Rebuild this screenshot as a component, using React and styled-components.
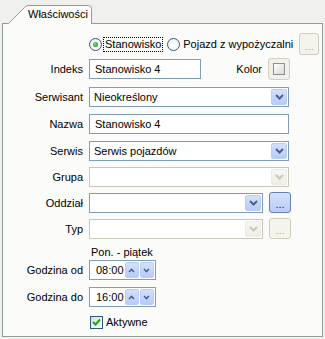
import React from 'react';
import styled, { createGlobalStyle, css } from 'styled-components';

const Global = createGlobalStyle`
  html, body { margin: 0; padding: 0; background: #f0f0ee; }
  body { font-family: "Liberation Sans", Arial, sans-serif; font-size: 11px; color: #000; }
`;

const Page = styled.div`
  width: 325px;
  height: 339px;
  box-sizing: border-box;
  padding: 5px 2px 2px 2px;
  display: flex;
  flex-direction: column;
`;

const TabStrip = styled.div`
  display: flex;
  height: 18px;
  padding-left: 6px;
  position: relative;
  z-index: 1;
`;

const Tab = styled.div`
  position: relative;
  width: 84px;
  height: 19px;
  box-sizing: border-box;
  padding-left: 20px;
`;

const TabShape = styled.svg`
  position: absolute;
  left: 0;
  top: 0;
`;

const TabText = styled.span`
  position: relative;
  line-height: 19px;
  white-space: nowrap;
`;

const Panel = styled.div`
  flex: 1;
  box-sizing: border-box;
  border: 1px solid #919b9c;
  background: #fbfbfa;
  padding-top: 9px;
  display: flex;
  flex-direction: column;
`;

const RadioRow = styled.div`
  display: flex;
  align-items: center;
  height: 22px;
  padding-left: 86px;
  padding-right: 3px;
`;

const RadioOption = styled.div`
  display: flex;
  align-items: center;
  margin-right: 4px;
`;

const RadioCircle = styled.span`
  width: 13px;
  height: 13px;
  box-sizing: border-box;
  border-radius: 50%;
  border: 1px solid #2f5a86;
  background: radial-gradient(circle at 60% 60%, #ffffff 30%, #e3e2dc 100%);
  display: flex;
  align-items: center;
  justify-content: center;
  &::after {
    content: '';
    display: ${(p) => (p.$checked ? 'block' : 'none')};
    width: 5px;
    height: 5px;
    border-radius: 50%;
    background: radial-gradient(circle at 40% 40%, #7ee27e 0%, #21a121 70%);
  }
`;

const RadioLabel = styled.span`
  margin-left: 1px;
  padding: 0 1px;
  line-height: 13px;
  border: 1px dotted ${(p) => (p.$focused ? '#000' : 'transparent')};
  white-space: nowrap;
`;

const Form = styled.div`
  display: flex;
  flex-direction: column;
`;

const Row = styled.div`
  display: grid;
  grid-template-columns: 80px auto;
  column-gap: 6px;
  align-items: center;
  min-height: ${(p) => p.$h || 20}px;
  margin-top: ${(p) => p.$mt}px;
`;

const Label = styled.span`
  text-align: right;
  white-space: nowrap;
`;

const Controls = styled.div`
  display: flex;
  align-items: center;
  width: ${(p) => p.$w || 200}px;
`;

const fieldBox = css`
  height: 20px;
  box-sizing: border-box;
  border: 1px solid ${(p) => (p.$disabled ? '#c9c7ba' : '#7f9db9')};
  background: #fff;
`;

const TextInput = styled.div`
  ${fieldBox};
  width: ${(p) => p.$w}px;
  padding: 0 5px;
  line-height: 18px;
  white-space: nowrap;
`;

const Combo = styled.div`
  ${fieldBox};
  width: ${(p) => p.$w}px;
  display: flex;
  align-items: stretch;
  padding: 1px;
`;

const ComboText = styled.span`
  flex: 1;
  padding-left: 3px;
  line-height: 16px;
  white-space: nowrap;
`;

const ArrowBtn = styled.span`
  width: 16px;
  box-sizing: border-box;
  border-radius: 2px;
  border: 1px solid ${(p) => (p.$disabled ? '#ecebe5' : '#bccdf4')};
  background: ${(p) =>
    p.$disabled
      ? 'linear-gradient(#f7f6f1, #eeede7)'
      : 'linear-gradient(#d4e0fd, #b7cbf7)'};
  display: flex;
  align-items: center;
  justify-content: center;
`;

const DotsButton = styled.div`
  width: 22px;
  height: ${(p) => p.$h || 21}px;
  box-sizing: border-box;
  border-radius: 3px;
  border: 1px solid ${(p) => (p.$disabled ? '#cfccbd' : '#6680b0')};
  background: ${(p) =>
    p.$disabled
      ? '#f5f4ec'
      : 'linear-gradient(#d5e1fc, #b9ccf6)'};
  color: ${(p) => (p.$disabled ? '#b5b2a4' : '#1b2d4f')};
  display: flex;
  align-items: flex-end;
  justify-content: center;
  padding-bottom: 4px;
  line-height: 8px;
  font-size: 11px;
  margin-left: ${(p) => (p.$auto ? 'auto' : `${p.$ml || 0}px`)};
`;

const KolorLabel = styled.span`
  margin-left: auto;
  margin-right: 6px;
`;

const KolorButton = styled.div`
  width: 22px;
  height: 22px;
  box-sizing: border-box;
  border-radius: 3px;
  border: 1px solid #d3d0c2;
  background: #f1f0ea;
  display: flex;
  align-items: center;
  justify-content: center;
`;

const Swatch = styled.span`
  width: 12px;
  height: 12px;
  box-sizing: border-box;
  border: 1px solid #8f8f8f;
  background: linear-gradient(135deg, #ffffff, #d9d9d6);
`;

const PlainText = styled.span`
  padding-left: 2px;
  line-height: 14px;
  white-space: nowrap;
`;

const Spin = styled.div`
  ${fieldBox};
  width: 67px;
  display: flex;
  align-items: stretch;
  padding: 1px;
`;

const SpinText = styled.span`
  flex: 1;
  padding-left: 5px;
  line-height: 16px;
  font-size: 11px;
`;

const SpinBtn = styled.span`
  width: 15px;
  box-sizing: border-box;
  margin-left: 1px;
  border-radius: 2px;
  border: 1px solid #bccdf4;
  background: linear-gradient(#d4e0fd, #b7cbf7);
  display: flex;
  align-items: center;
  justify-content: center;
`;

const CheckRow = styled.div`
  display: flex;
  align-items: center;
  padding-left: 1px;
`;

const CheckBox = styled.span`
  width: 13px;
  height: 13px;
  box-sizing: border-box;
  border: 1px solid #2b5a87;
  background: linear-gradient(135deg, #dcdcd6, #ffffff);
  display: flex;
  align-items: center;
  justify-content: center;
`;

const CheckLabel = styled.span`
  margin-left: 3px;
  line-height: 14px;
`;

const Chevron = ({ disabled }) => (
  <svg width="9" height="6" viewBox="0 0 9 6">
    <path
      d="M1 1 L4.5 4.5 L8 1"
      fill="none"
      stroke={disabled ? '#c8c6b8' : '#4d6185'}
      strokeWidth="2"
    />
  </svg>
);

const SpinArrow = ({ up }) => (
  <svg width="7" height="5" viewBox="0 0 7 5">
    <path
      d={up ? 'M1 4 L3.5 1.5 L6 4' : 'M1 1 L3.5 3.5 L6 1'}
      fill="none"
      stroke="#4d6185"
      strokeWidth="1.6"
    />
  </svg>
);

const ComboField = ({ w, text, disabled }) => (
  <Combo $w={w} $disabled={disabled}>
    <ComboText>{text}</ComboText>
    <ArrowBtn $disabled={disabled}>
      <Chevron disabled={disabled} />
    </ArrowBtn>
  </Combo>
);

const SpinField = ({ value }) => (
  <Spin>
    <SpinText>{value}</SpinText>
    <SpinBtn>
      <SpinArrow up />
    </SpinBtn>
    <SpinBtn>
      <SpinArrow />
    </SpinBtn>
  </Spin>
);

export default function App() {
  return (
    <>
      <Global />
      <Page>
        <TabStrip>
          <Tab>
            <TabShape width="84" height="19" viewBox="0 0 84 19">
              <path
                d="M0.5 19 L0.5 18.5 L16.5 2.5 Q18 0.5 20 0.5 L80.5 0.5 Q83.5 0.5 83.5 3.5 L83.5 19"
                fill="#fbfbfa"
                stroke="#919b9c"
                strokeWidth="1"
              />
            </TabShape>
            <TabText>Właściwości</TabText>
          </Tab>
        </TabStrip>
        <Panel>
          <RadioRow>
            <RadioOption>
              <RadioCircle $checked />
              <RadioLabel $focused>Stanowisko</RadioLabel>
            </RadioOption>
            <RadioOption>
              <RadioCircle />
              <RadioLabel>Pojazd z wypożyczalni</RadioLabel>
            </RadioOption>
            <DotsButton $disabled $auto $h={22}>...</DotsButton>
          </RadioRow>
          <Form>
            <Row $mt={3} $h={22}>
              <Label>Indeks</Label>
              <Controls $w={201}>
                <TextInput $w={112}>Stanowisko 4</TextInput>
                <KolorLabel>Kolor</KolorLabel>
                <KolorButton>
                  <Swatch />
                </KolorButton>
              </Controls>
            </Row>
            <Row $mt={7}>
              <Label>Serwisant</Label>
              <Controls>
                <ComboField w={200} text="Nieokreślony" />
              </Controls>
            </Row>
            <Row $mt={7}>
              <Label>Nazwa</Label>
              <Controls>
                <TextInput $w={200}>Stanowisko 4</TextInput>
              </Controls>
            </Row>
            <Row $mt={7}>
              <Label>Serwis</Label>
              <Controls>
                <ComboField w={200} text="Serwis pojazdów" />
              </Controls>
            </Row>
            <Row $mt={6}>
              <Label>Grupa</Label>
              <Controls>
                <ComboField w={200} text="" disabled />
              </Controls>
            </Row>
            <Row $mt={5} $h={21}>
              <Label>Oddział</Label>
              <Controls $w={202}>
                <ComboField w={174} text="" />
                <DotsButton $ml={6}>...</DotsButton>
              </Controls>
            </Row>
            <Row $mt={5} $h={21}>
              <Label>Typ</Label>
              <Controls $w={202}>
                <ComboField w={174} text="" disabled />
                <DotsButton $ml={6} $disabled>...</DotsButton>
              </Controls>
            </Row>
            <Row $mt={6} $h={14}>
              <span />
              <Controls>
                <PlainText>Pon. - piątek</PlainText>
              </Controls>
            </Row>
            <Row $mt={1}>
              <Label>Godzina od</Label>
              <Controls>
                <SpinField value="08:00" />
              </Controls>
            </Row>
            <Row $mt={7}>
              <Label>Godzina do</Label>
              <Controls>
                <SpinField value="16:00" />
              </Controls>
            </Row>
            <Row $mt={8} $h={14}>
              <span />
              <Controls>
                <CheckRow>
                  <CheckBox>
                    <svg width="9" height="8" viewBox="0 0 9 8">
                      <path d="M1 4 L3.5 6.5 L8 1.5" fill="none" stroke="#21a121" strokeWidth="2" />
                    </svg>
                  </CheckBox>
                  <CheckLabel>Aktywne</CheckLabel>
                </CheckRow>
              </Controls>
            </Row>
          </Form>
        </Panel>
      </Page>
    </>
  );
}
